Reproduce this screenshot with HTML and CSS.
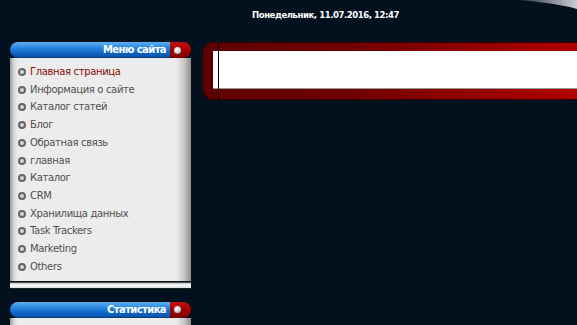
FILE: index.html
```html
<!DOCTYPE html>
<html lang="ru">
<head>
    <meta charset="UTF-8">
    <title>Главная страница</title>
    <link rel="stylesheet" href="styles.css">
</head>
<body>
    <svg class="gloss" width="60" height="14" viewBox="0 0 60 14">
        <defs>
            <linearGradient id="gl" x1="0" y1="0" x2="1" y2="0">
                <stop offset="0" stop-color="#1a2533"/>
                <stop offset="0.6" stop-color="#8a8f99"/>
                <stop offset="1" stop-color="#c9ccd2"/>
            </linearGradient>
        </defs>
        <path d="M0 0 L60 0 L60 9 Q40 3 0 0 Z" fill="url(#gl)"/>
    </svg>

    <div class="top">
        <span class="date">Понедельник, 11.07.2016, 12:47</span>
    </div>

    <div class="page">
        <div class="sidebar">
            <div class="block">
                <div class="block-title">
                    <span class="title-bar">Меню сайта</span>
                    <span class="title-cap"><i></i></span>
                </div>
                <ul class="menu">
                    <li class="active">Главная страница</li>
                    <li>Информация о сайте</li>
                    <li>Каталог статей</li>
                    <li>Блог</li>
                    <li>Обратная связь</li>
                    <li>главная</li>
                    <li>Каталог</li>
                    <li>CRM</li>
                    <li>Хранилища данных</li>
                    <li>Task Trackers</li>
                    <li>Marketing</li>
                    <li>Others</li>
                </ul>
                <div class="block-bottom"></div>
            </div>

            <div class="block">
                <div class="block-title">
                    <span class="title-bar">Статистика</span>
                    <span class="title-cap"><i></i></span>
                </div>
                <div class="block-body"></div>
            </div>
        </div>

        <div class="content">
            <div class="frame">
                <div class="frame-inner"></div>
            </div>
        </div>
    </div>
</body>
</html>
```

FILE: styles.css
```css
body {
    margin: 0;
    background: #03101d;
    font-family: "DejaVu Sans", Verdana, sans-serif;
    overflow: hidden;
    height: 325px;
}
.gloss {
    position: absolute;
    top: 0;
    right: 0;
}
.top {
    height: 42px;
    padding-left: 252px;
    box-sizing: border-box;
    padding-top: 9px;
    line-height: 12px;
    font-size: 0;
}
.date {
    color: #fff;
    font-family: "DejaVu Sans Condensed", "DejaVu Sans", sans-serif;
    font-size: 9.5px;
    font-weight: bold;
    letter-spacing: -0.45px;
}
.page {
    display: flex;
    align-items: flex-start;
}
.sidebar {
    width: 181px;
    margin-left: 10px;
}
.block {
    margin-bottom: 13px;
}
.block-title {
    display: flex;
    height: 16px;
}
.title-bar {
    flex: 1;
    background: linear-gradient(to bottom, #5fb0f2 0%, #2a88e0 35%, #0c63c4 70%, #0a4f9e 100%);
    border-radius: 8px 0 0 8px;
    color: #fff;
    font-size: 10px;
    font-weight: bold;
    text-align: right;
    line-height: 16px;
    padding-right: 4px;
    letter-spacing: -0.6px;
    box-shadow: inset 0 -1px 0 #083c7a;
}
.title-cap {
    width: 21px;
    background: linear-gradient(to bottom, #c41010 0%, #a40000 50%, #7a0000 100%);
    border-radius: 0 8px 8px 0;
    display: flex;
    align-items: center;
    padding-left: 4px;
    box-sizing: border-box;
}
.title-cap i {
    width: 7px;
    height: 7px;
    border-radius: 50%;
    background: radial-gradient(circle at 40% 35%, #ffffff 0%, #d8d8d8 45%, #8a8a8a 100%);
}
.menu {
    list-style: none;
    margin: 0;
    padding: 5px 0 5px 8px;
    background: linear-gradient(to right, #9a9a9a 0, #d8d8d8 4px, #ececec 8px, #ececec 166px, #c8c8c8 174px, #8a8a8a 181px);
}
.menu li {
    position: relative;
    padding-left: 12px;
    height: 17.73px;
    line-height: 17.73px;
    font-size: 10px;
    letter-spacing: -0.35px;
    color: #505050;
}
.menu li::before {
    content: "";
    position: absolute;
    left: 0;
    top: 5px;
    width: 4px;
    height: 4px;
    border: 2px solid #666;
    border-radius: 50%;
    background: #d6d6d6;
}
.menu li.active {
    color: #8a0b0b;
}
.block-bottom {
    height: 5px;
    border-top: 1px solid #555;
    border-bottom: 1px solid #222;
    background: linear-gradient(to bottom, #bdbdbd, #ffffff 40%, #dcdcdc);
    margin-top: 1px;
}
.block-body {
    height: 7px;
    background: linear-gradient(to right, #9a9a9a 0, #d8d8d8 4px, #ececec 8px, #ececec 166px, #c8c8c8 174px, #8a8a8a 181px);
}
.content {
    flex: 1;
    margin-left: 12px;
}
.frame {
    height: 58px;
    padding: 9px 0 11px 10px;
    box-sizing: border-box;
    border-radius: 11px 0 0 11px;
    background: linear-gradient(to right, #5e0000 0%, #700000 40%, #b00000 100%);
    box-shadow: inset 0 1px 0 #3a0000, inset 0 -1px 0 #3a0000;
    position: relative;
}
.frame::after {
    content: "";
    position: absolute;
    left: 15px;
    top: 0;
    bottom: 0;
    width: 1px;
    background: #000;
}
.frame-inner {
    height: 100%;
    background: #fff;
    border-bottom: 1px solid #999;
    box-sizing: border-box;
}
```
